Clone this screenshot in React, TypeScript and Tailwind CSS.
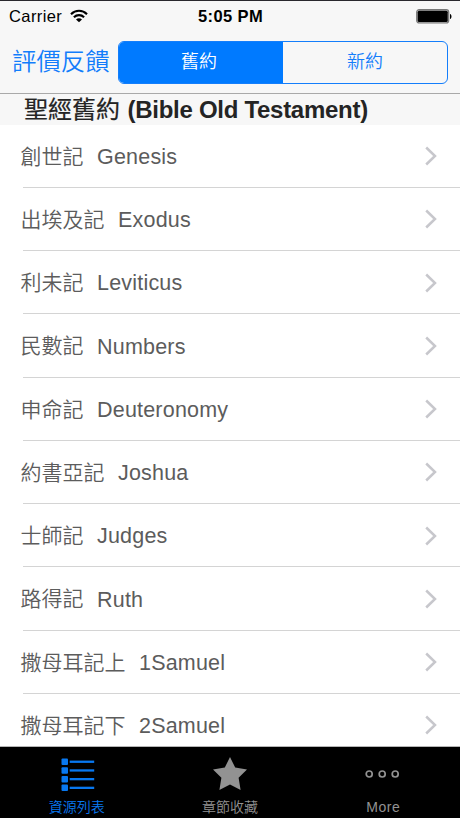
import { useState } from 'react'

const books = [
  { zh: '創世記', en: 'Genesis' },
  { zh: '出埃及記', en: 'Exodus' },
  { zh: '利未記', en: 'Leviticus' },
  { zh: '民數記', en: 'Numbers' },
  { zh: '申命記', en: 'Deuteronomy' },
  { zh: '約書亞記', en: 'Joshua' },
  { zh: '士師記', en: 'Judges' },
  { zh: '路得記', en: 'Ruth' },
  { zh: '撒母耳記上', en: '1Samuel' },
  { zh: '撒母耳記下', en: '2Samuel' },
]

function StatusBar() {
  return (
    <div className="grid h-[30px] shrink-0 grid-cols-3 items-center pr-2 pl-[9px] text-black">
      <div className="flex items-center gap-2">
        <span className="text-[16.5px] tracking-[0.4px]">Carrier</span>
        <svg width="18" height="14" viewBox="0 0 18 14" fill="none" stroke="#000" strokeWidth="2.1">
          <path d="M1 5.2C5.5.6 12.5.6 17 5.2" />
          <path d="M3.9 8.3c2.9-2.9 7.3-2.9 10.2 0" />
          <path d="M9 13.2 6 10.4c1.7-1.7 4.3-1.7 6 0Z" fill="#000" stroke="none" />
        </svg>
      </div>
      <span className="text-center text-[16.5px] font-bold tracking-[0.4px] whitespace-nowrap">
        5:05 PM
      </span>
      <svg className="justify-self-end" width="36" height="15" viewBox="0 0 36 15">
        <rect x="0.7" y="0.7" width="32" height="13.3" rx="2.5" fill="#bbb" stroke="#777" strokeWidth="1.2" />
        <rect x="1.7" y="1.7" width="30" height="11.3" rx="1.5" fill="#000" />
        <path d="M34 5c2 .6 2 4.4 0 5Z" fill="#000" />
      </svg>
    </div>
  )
}

function ListIcon() {
  return (
    <svg className="ml-0.5" width="34" height="34" viewBox="0 0 34 34" fill="#0878f0">
      {[0, 8.7, 17.4, 26.1].map((y) => (
        <g key={y}>
          <rect x="0.5" y={y + 0.5} width="6.5" height="6.5" rx="1" />
          <rect x="8.7" y={y + 2.6} width="24.5" height="2.3" />
        </g>
      ))}
    </svg>
  )
}

function StarIcon() {
  return (
    <svg width="36" height="36" viewBox="0 0 36 36" fill="#929292">
      <path d="M18 1l5.2 10.6 11.8 1.8-8.4 8.4 2 12.2L18 28.6 7.4 34l2-12.2L1 13.4l11.8-1.8Z" />
    </svg>
  )
}

function MoreIcon() {
  return (
    <svg width="36" height="10" viewBox="0 0 36 10" fill="none" stroke="#929292" strokeWidth="1.7">
      <circle cx="4.2" cy="5" r="3" />
      <circle cx="17.2" cy="5" r="3" />
      <circle cx="30.2" cy="5" r="3" />
    </svg>
  )
}

export default function App() {
  const [testament, setTestament] = useState('old')

  return (
    <div className="flex h-[818px] w-[460px] flex-col overflow-hidden border-t border-[#29282d] bg-[#f7f7f7] font-['Liberation_Sans','Noto_Sans_CJK_TC',sans-serif]">
      <StatusBar />

      {/* Navigation bar */}
      <div className="flex h-[63px] shrink-0 items-center border-b border-[#a9a9a9] px-3">
        <button className="w-[106px] text-left text-[24.4px] leading-none font-[350] whitespace-nowrap text-[#127dfb]">
          評價反饋
        </button>
        <div className="flex h-[43px] flex-1 overflow-hidden rounded-md border border-[#147efb] text-[18px] font-[350]">
          <button
            onClick={() => setTestament('old')}
            className={testament === 'old' ? 'w-1/2 bg-[#007aff] pr-1 text-white' : 'w-1/2 pr-1 text-[#147efb]'}
          >
            舊約
          </button>
          <button
            onClick={() => setTestament('new')}
            className={testament === 'new' ? 'w-1/2 bg-[#007aff] text-white' : 'w-1/2 text-[#147efb]'}
          >
            新約
          </button>
        </div>
      </div>

      <h1 className="flex h-[30.5px] shrink-0 items-center gap-[7.5px] pl-[24px] text-[24px] leading-none text-[#242424]">
        <span className="pt-px font-normal [-webkit-text-stroke:0.2px]">聖經舊約</span>
        <span className="pt-0.5 font-bold tracking-[-0.28px]">(Bible Old Testament)</span>
      </h1>

      {/* Book list */}
      <div className="min-h-0 flex-1 overflow-hidden bg-white">
        {books.map((book) => (
          <div key={book.en} className="flex h-[63.25px] flex-col pl-[20.5px] text-[#5c5c5c]">
            <div className="flex flex-1 items-center justify-between pt-px pr-[23px]">
              <div className="flex items-center gap-[13.5px] leading-none">
                <span className="text-[21px] font-[350]">{book.zh}</span>
                <span className="pt-[3px] text-[21.5px] tracking-[0.2px]">{book.en}</span>
              </div>
              <svg width="12" height="20" viewBox="0 0 12 20" fill="none" stroke="#c7c7cc" strokeWidth="2.5">
                <path d="M1.2 1.5 10 10l-8.8 8.5" />
              </svg>
            </div>
            <div className="ml-0.5 h-px bg-[#d4d4d4]" />
          </div>
        ))}
      </div>

      {/* Tab bar */}
      <div className="grid h-[72px] shrink-0 grid-cols-3 border-t border-[#b5b5b5] bg-black text-[14px] text-[#929292]">
        <div className="flex flex-col items-center text-[#0878f0]">
          <div className="flex h-[53px] items-center pt-0.5">
            <ListIcon />
          </div>
          <span className="leading-none font-[350]">資源列表</span>
        </div>
        <div className="flex flex-col items-center">
          <div className="flex h-[53px] items-center">
            <StarIcon />
          </div>
          <span className="leading-none font-[350]">章節收藏</span>
        </div>
        <div className="flex flex-col items-center">
          <div className="flex h-[53px] items-center">
            <MoreIcon />
          </div>
          <span className="leading-none tracking-[0.5px]">More</span>
        </div>
      </div>
    </div>
  )
}
